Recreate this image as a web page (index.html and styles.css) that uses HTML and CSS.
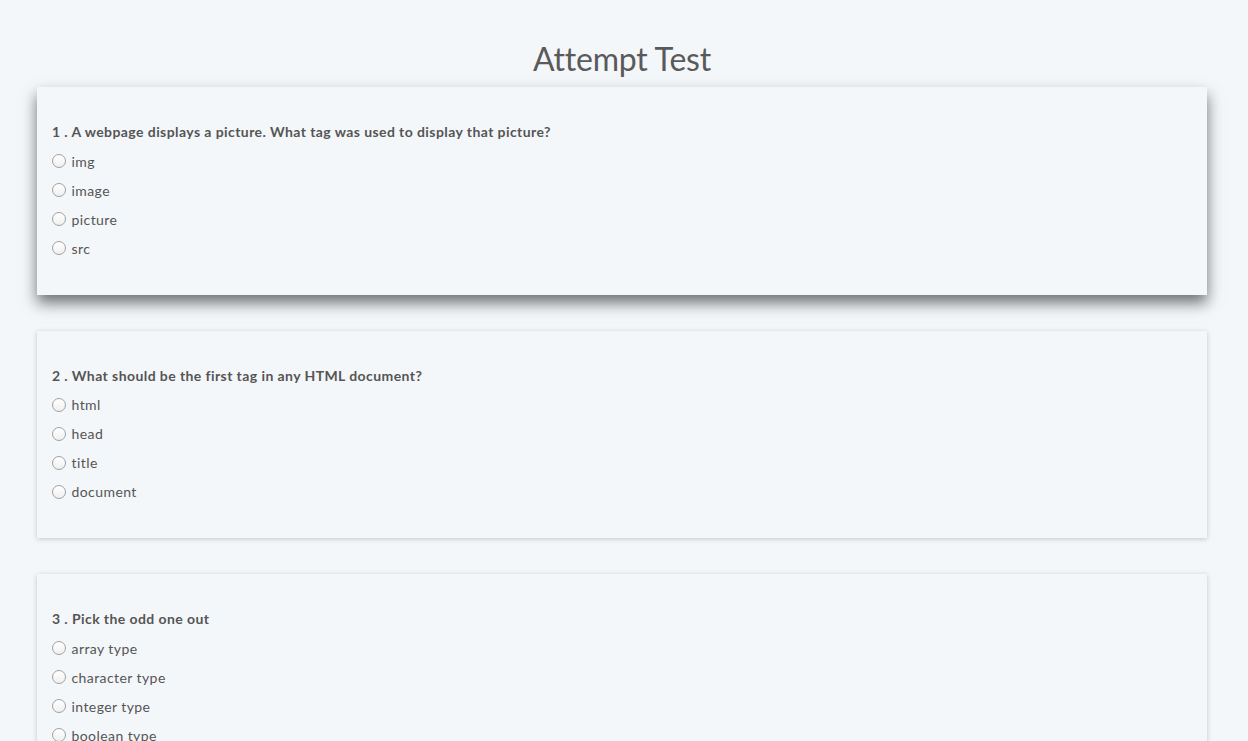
FILE: index.html
```html
<!DOCTYPE html>
<html lang="en">
<head>
<meta charset="utf-8">
<title>Attempt Test</title>
<link rel="stylesheet" href="styles.css">
</head>
<body>
<div class="container">
  <h1 class="page-title">Attempt Test</h1>

  <div class="card card-raised">
    <p class="question">1 . A webpage displays a picture. What tag was used to display that picture?</p>
    <label class="option"><span class="radio"></span><span>img</span></label>
    <label class="option"><span class="radio"></span><span>image</span></label>
    <label class="option"><span class="radio"></span><span>picture</span></label>
    <label class="option"><span class="radio"></span><span>src</span></label>
  </div>

  <div class="card">
    <p class="question">2 . What should be the first tag in any HTML document?</p>
    <label class="option"><span class="radio"></span><span>html</span></label>
    <label class="option"><span class="radio"></span><span>head</span></label>
    <label class="option"><span class="radio"></span><span>title</span></label>
    <label class="option"><span class="radio"></span><span>document</span></label>
  </div>

  <div class="card">
    <p class="question">3 . Pick the odd one out</p>
    <label class="option"><span class="radio"></span><span>array type</span></label>
    <label class="option"><span class="radio"></span><span>character type</span></label>
    <label class="option"><span class="radio"></span><span>integer type</span></label>
    <label class="option"><span class="radio"></span><span>boolean type</span></label>
  </div>
</div>
</body>
</html>
```

FILE: styles.css
```css
html, body {
  margin: 0;
  padding: 0;
  background: #f4f7fa;
}

body {
  font-family: "Lato", "Open Sans", sans-serif;
  color: #555;
  font-size: 14px;
  padding-right: 4px;
}

.container {
  width: 1170px;
  margin: 0 auto;
  display: flex;
  flex-direction: column;
  gap: 36px;
  padding-bottom: 40px;
}

.page-title {
  margin: 39px 0 -28px;
  text-align: center;
  font-size: 32px;
  line-height: 40px;
  font-weight: 400;
  color: #5a5a5a;
  letter-spacing: -0.2px;
}

.card {
  background: #f4f7fa;
  padding: 25px 15px 32px;
  box-shadow: 0 1px 5px rgba(0, 0, 0, 0.2);
  display: flex;
  flex-direction: column;
}

.card-raised {
  box-shadow: 0 8px 14px rgba(0, 0, 0, 0.55);
}

.question {
  margin: 10px 0 4.5px;
  font-weight: 700;
  line-height: 20px;
  color: #555;
  letter-spacing: 0.42px;
}

.option {
  display: flex;
  align-items: center;
  gap: 6px;
  height: 29px;
  font-size: 14px;
  color: #555;
  letter-spacing: 0.42px;
}

.radio {
  width: 14px;
  height: 14px;
  margin-left: -0.5px;
  box-sizing: border-box;
  border-radius: 50%;
  border: 1px solid #a0a0a0;
  background: linear-gradient(#ffffff, #f0f0f0);
  flex: none;
}
```
